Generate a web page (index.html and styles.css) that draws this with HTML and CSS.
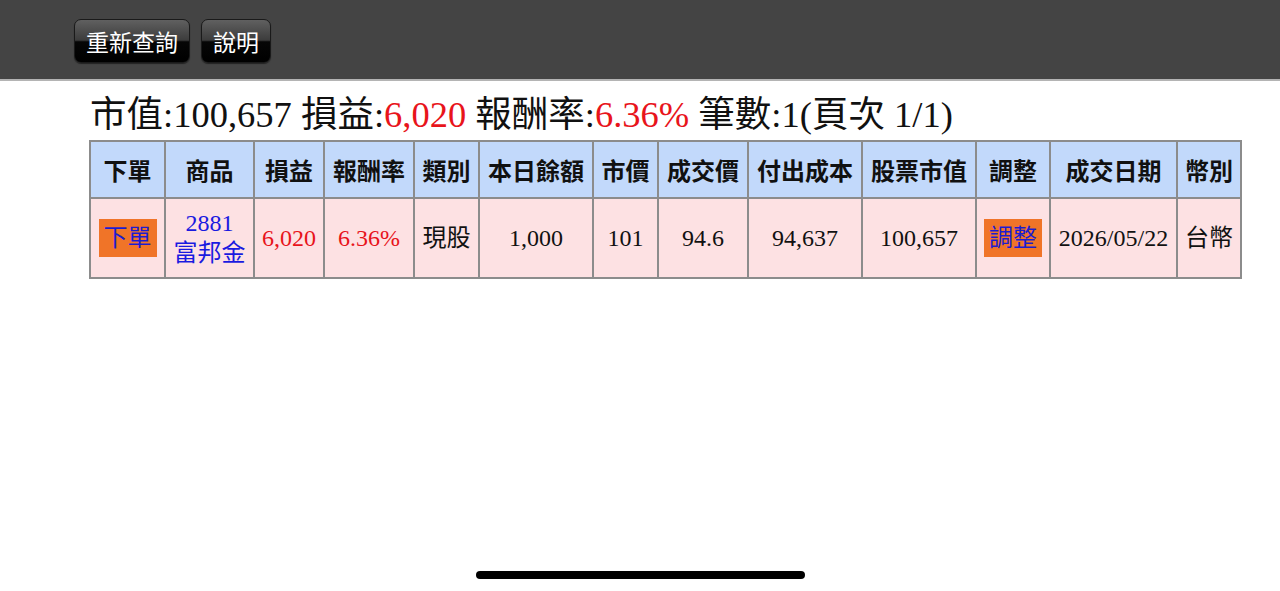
FILE: index.html
```html
<!DOCTYPE html>
<html lang="zh-Hant">
<head>
<meta charset="utf-8">
<title>庫存查詢</title>
<link rel="stylesheet" href="styles.css">
</head>
<body>
<div class="topbar">
  <button class="tbtn">重新查詢</button>
  <button class="tbtn">說明</button>
</div>
<div class="summary">市值:100,657 損益:<span class="red">6,020</span> 報酬率:<span class="red">6.36%</span> 筆數:1(頁次 1/1)</div>
<table class="grid">
  <colgroup>
    <col class="c75"><col class="c89"><col class="c70"><col class="c90"><col class="c65"><col class="c114"><col class="c65"><col class="c90"><col class="c114"><col class="c114"><col class="c74"><col class="c127"><col class="c64">
  </colgroup>
  <thead>
    <tr>
      <th>下單</th><th>商品</th><th>損益</th><th>報酬率</th><th>類別</th><th>本日餘額</th><th>市價</th><th>成交價</th><th>付出成本</th><th>股票市值</th><th>調整</th><th>成交日期</th><th>幣別</th>
    </tr>
  </thead>
  <tbody>
    <tr>
      <td><span class="act">下單</span></td>
      <td class="blue">2881<br>富邦金</td>
      <td class="red">6,020</td>
      <td class="red">6.36%</td>
      <td>現股</td>
      <td>1,000</td>
      <td>101</td>
      <td>94.6</td>
      <td>94,637</td>
      <td>100,657</td>
      <td><span class="act">調整</span></td>
      <td>2026/05/22</td>
      <td>台幣</td>
    </tr>
  </tbody>
</table>
<div class="home-ind"></div>
</body>
</html>
```
FILE: styles.css
```css
html, body {
  margin: 0;
  padding: 0;
  background: #ffffff;
  height: 591px;
  overflow: hidden;
}
body {
  font-family: "Liberation Serif", "Noto Sans CJK TC", serif;
  color: #111;
}
.topbar {
  height: 81px;
  background: #444444;
  border-bottom: 2px solid #b4b4b4;
  box-sizing: border-box;
  display: flex;
  align-items: flex-start;
  gap: 11px;
  padding: 19px 0 0 74px;
}
.tbtn {
  height: 44px;
  padding: 0 11px;
  border: 1px solid #1a1a1a;
  border-radius: 7px;
  background: linear-gradient(to bottom, #606060 0%, #3c3c3c 48%, #060606 52%, #000000 100%);
  color: #ffffff;
  font-family: "Noto Sans CJK TC", "Liberation Sans", sans-serif;
  font-size: 23px;
  line-height: 40px;
  box-shadow: 0 1px 1px rgba(0,0,0,0.5);
  cursor: pointer;
}
.summary {
  margin: 10px 0 0 90px;
  font-size: 36.5px;
  line-height: 48px;
  height: 49px;
  white-space: nowrap;
}
.red { color: #e8141b; }
.blue { color: #1a1ae0; }
.grid {
  margin-left: 89px;
  width: 1152px;
  table-layout: fixed;
  border-collapse: collapse;
  border: 2px solid #8c8c8c;
}
.c75 { width: 75px; }
.c89 { width: 89px; }
.c70 { width: 70px; }
.c90 { width: 90px; }
.c65 { width: 65px; }
.c114 { width: 114px; }
.c74 { width: 74px; }
.c127 { width: 127px; }
.c64 { width: 64px; }
.grid th, .grid td {
  border: 2px solid #8c8c8c;
  text-align: center;
  padding: 0;
  white-space: nowrap;
}
.grid th {
  height: 55px;
  background: #c2d9fb;
  font-family: "Liberation Sans", "Noto Sans CJK TC", sans-serif;
  font-weight: bold;
  font-size: 24px;
  color: #111;
}
.grid td {
  height: 78px;
  background: #fde1e3;
  font-size: 24px;
  line-height: 30px;
}
.grid td.blue { color: #1a1ae0; }
.grid td.red { color: #e8141b; }
.act {
  display: inline-block;
  background: #f07428;
  color: #1c1cd0;
  font-family: "Liberation Sans", "Noto Sans CJK TC", sans-serif;
  font-size: 24px;
  line-height: 38px;
  padding: 0 5px;
}
.home-ind {
  position: absolute;
  left: 476px;
  top: 571px;
  width: 329px;
  height: 8px;
  border-radius: 4px;
  background: #000;
}
```
